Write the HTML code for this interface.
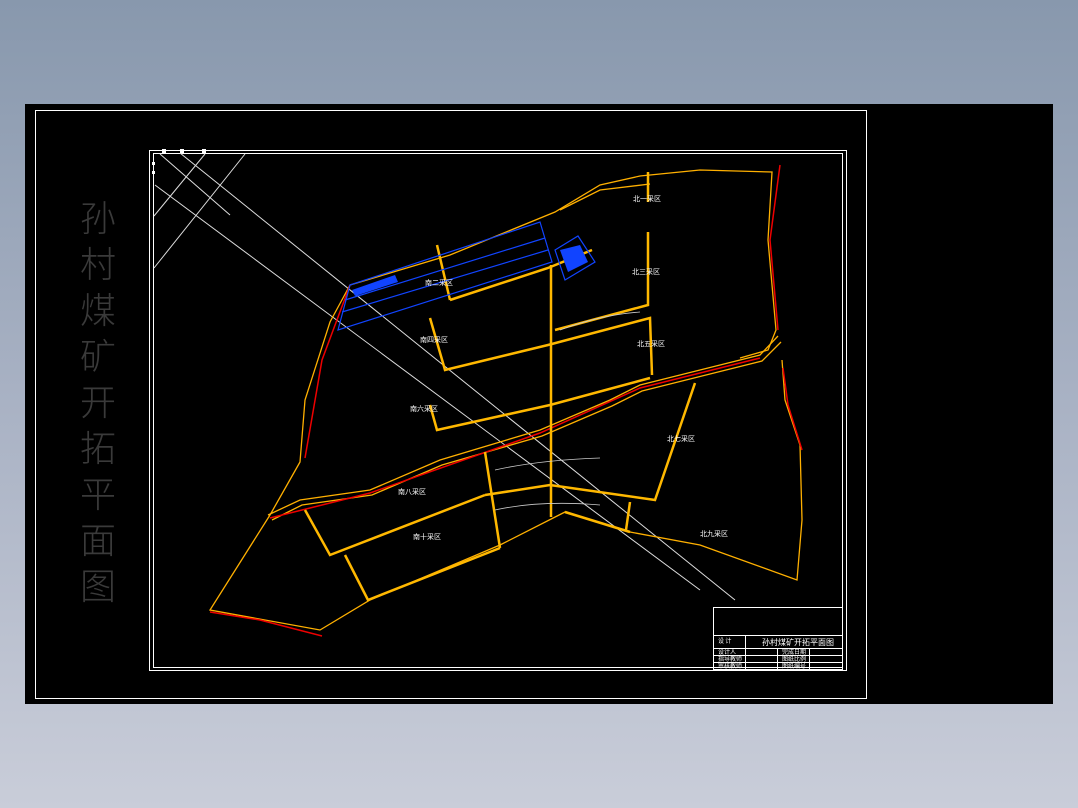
<!DOCTYPE html>
<html><head><meta charset="utf-8"><style>
html,body{margin:0;padding:0}
body{width:1078px;height:808px;overflow:hidden;background:linear-gradient(#8898ad 0%,#a9b2c4 50%,#c9cdd9 100%);position:relative;font-family:"Liberation Sans","Noto Sans CJK SC",sans-serif}
svg{position:absolute;left:0;top:0}
.t{position:absolute;left:78px;top:193px;width:40px;color:#3a3a3a;font-size:36px;line-height:46px;font-family:"Noto Sans CJK SC",sans-serif;font-weight:300;text-align:center}
</style></head><body>
<svg width="1078" height="808" viewBox="0 0 1078 808">
<rect x="25" y="104" width="1028" height="600" fill="#000"/>
<rect x="35.5" y="110.5" width="831" height="588" fill="none" stroke="#fff" stroke-width="1"/>
<rect x="149.5" y="150.5" width="697" height="520" fill="none" stroke="#fff" stroke-width="1"/>
<rect x="153.5" y="153.5" width="689" height="514" fill="none" stroke="#fff" stroke-width="1"/>
<g fill="#fff"><rect x="162" y="149" width="4" height="4"/><rect x="180" y="149" width="4" height="4"/><rect x="202" y="149" width="4" height="4"/><rect x="152" y="162" width="3" height="3"/><rect x="152" y="171" width="3" height="3"/></g>
<g stroke="#ddd" stroke-width="1" fill="none">
<line x1="180" y1="153" x2="735" y2="600"/>
<line x1="155" y1="185" x2="700" y2="590"/>
<line x1="245" y1="154" x2="154" y2="268"/>
<line x1="205" y1="154" x2="154" y2="216"/>
<line x1="160" y1="154" x2="230" y2="215"/>
</g>
<g stroke="#ffb000" stroke-width="1.3" fill="none">
<polyline points="350,285 450,255 555,212 600,185 640,176 700,170 772,172 768,240 776,330 768,350 740,358"/>
<polyline points="782,360 785,400 800,445 802,520 797,580 700,545 630,532 565,512 500,545 370,600 320,630 210,610 270,515 300,462 305,400 330,322 350,285"/>
<polyline points="268,515 300,500 370,490 440,460 540,430 610,400 640,385 700,370 760,355 778,336"/>
<polyline points="272,520 302,505 372,495 442,465 542,436 612,406 642,391 702,376 762,361 781,342"/>
<polyline points="560,210 600,190 650,184"/>
</g>
<g stroke="#e00" stroke-width="1.5" fill="none">
<polyline points="350,285 322,360 305,458"/>
<polyline points="780,165 770,240 778,330"/>
<polyline points="783,368 788,405 802,450"/>
<polyline points="210,612 260,620 322,636"/>
<polyline points="270,518 370,493 540,433 640,388 760,358"/>
</g>
<g stroke="#ffb800" stroke-width="2.5" fill="none">
<line x1="551" y1="265" x2="551" y2="517"/>
<polyline points="430,318 445,370 548,345 650,318 652,375"/>
<polyline points="648,232 648,305 555,330"/>
<polyline points="430,405 437,430 550,405 650,378"/>
<line x1="648" y1="172" x2="648" y2="202"/>
<polyline points="485,452 500,548"/>
<polyline points="485,495 550,485 655,500 695,383"/>
<polyline points="305,510 330,555 485,495"/>
<polyline points="345,555 368,600 500,548"/>
<polyline points="565,512 630,532"/>
<line x1="630" y1="502" x2="626" y2="530"/>
<polyline points="450,300 548,268 592,250"/>
<line x1="437" y1="245" x2="450" y2="300"/>
</g>
<g stroke="#14f" stroke-width="1.2" fill="none">
<polygon points="350,285 540,222 552,262 338,330"/>
<line x1="345" y1="300" x2="545" y2="238"/>
<line x1="342" y1="312" x2="548" y2="250"/>
<polygon points="555,250 578,236 595,262 565,280"/>
</g>
<path d="M352 290 L395 275 L398 282 L355 296Z" fill="#14f"/>
<path d="M560 250 L580 245 L588 262 L568 272Z" fill="#14f"/>
<g stroke="#ccc" stroke-width="0.8" fill="none">
<path d="M495 470 Q540 460 600 458"/>
<path d="M495 510 Q540 500 600 505"/>
<path d="M560 330 Q600 315 640 312"/>
</g>
<g fill="#fff" font-size="7" font-family="Noto Sans CJK SC,sans-serif">
<text x="425" y="285">南二采区</text><text x="420" y="342">南四采区</text><text x="410" y="411">南六采区</text>
<text x="398" y="494">南八采区</text><text x="413" y="539">南十采区</text><text x="633" y="201">北一采区</text>
<text x="632" y="274">北三采区</text><text x="637" y="346">北五采区</text><text x="667" y="441">北七采区</text><text x="700" y="536">北九采区</text>
</g>
<g stroke="#fff" stroke-width="1" fill="none">
<rect x="713.5" y="607.5" width="129" height="62"/>
<line x1="713" y1="635.5" x2="842" y2="635.5"/>
<line x1="713" y1="648.5" x2="842" y2="648.5"/>
<line x1="713" y1="655.5" x2="842" y2="655.5"/>
<line x1="713" y1="662.5" x2="842" y2="662.5"/>
<line x1="745.5" y1="635" x2="745.5" y2="670"/>
<line x1="777.5" y1="648" x2="777.5" y2="670"/>
<line x1="809.5" y1="648" x2="809.5" y2="670"/>
</g>
<g fill="#fff" font-size="8" font-family="Noto Sans CJK SC,sans-serif">
<text x="762" y="645">孙村煤矿开拓平面图</text>
<text x="718" y="643" font-size="6">设 计</text>
<text x="718" y="654" font-size="6">设计人</text><text x="718" y="661" font-size="6">指导教师</text><text x="718" y="668" font-size="6">审核教师</text>
<text x="782" y="654" font-size="6">完成日期</text><text x="782" y="661" font-size="6">图纸比例</text><text x="782" y="668" font-size="6">图纸编号</text>
</g>
</svg>
<div class="t">孙<br>村<br>煤<br>矿<br>开<br>拓<br>平<br>面<br>图</div>
</body></html>
